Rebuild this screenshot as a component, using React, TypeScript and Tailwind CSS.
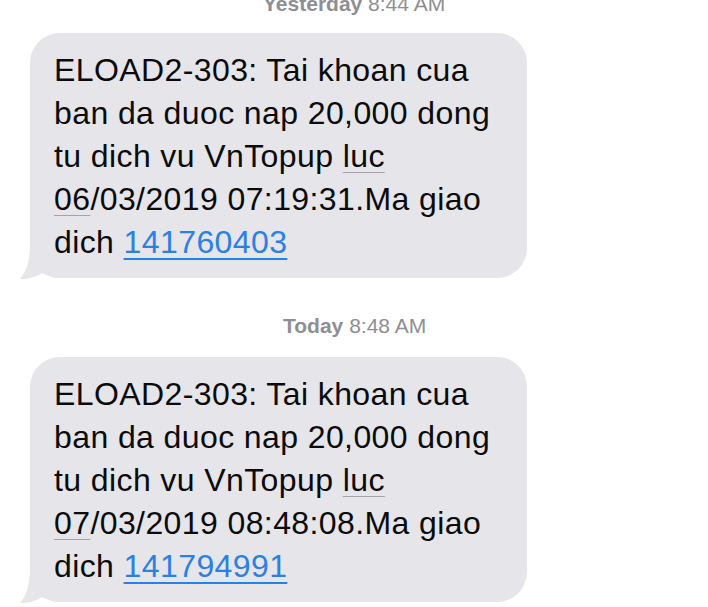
import React from "react";

type Msg = {
    header: string;
    when: string;
    date: string;
    rest: string;
    code: string;
};

const messages: Msg[] = [
    { header: "Yesterday", when: "8:44 AM", date: "06", rest: "/03/2019 07:19:31.Ma giao", code: "141760403" },
    { header: "Today", when: "8:48 AM", date: "07", rest: "/03/2019 08:48:08.Ma giao", code: "141794991" },
];

function Tail() {
    return (
        <svg
            className="absolute left-[-12px] top-[calc(100%-38px)]"
            width="44"
            height="40"
            viewBox="0 0 44 40"
        >
            <path d="M12,5 C12,22 8,32 2,39 C10,39 18,37 24,33 C30,36 36,38 44,38 L44,5 Z" fill="#e5e5ea" />
        </svg>
    );
}

function Bubble({ m }: { m: Msg }) {
    const dotted = "underline decoration-[#a3a3a8] decoration-1 underline-offset-[5px]";
    return (
        <div className="relative ml-[30px] w-[497px] rounded-[30px] bg-[#e5e5ea] pl-[24px] pt-[16px] pb-[14px] text-[32px] leading-[43px] tracking-[0.4px] text-[#0b0b0b]">
            <Tail />
            <div className="relative">
                <div className="whitespace-nowrap">ELOAD2-303: Tai khoan cua</div>
                <div className="whitespace-nowrap">ban da duoc nap 20,000 dong</div>
                <div className="whitespace-nowrap">
                    tu dich vu VnTopup <span className={dotted}>luc</span>
                </div>
                <div className="whitespace-nowrap">
                    <span className={dotted}>{m.date}</span>
                    {m.rest}
                </div>
                <div className="whitespace-nowrap">
                    dich{" "}
                    <span className="text-[#2a80e4] underline decoration-[#2a80e4] decoration-2 underline-offset-[5px]">
                        {m.code}
                    </span>
                </div>
            </div>
        </div>
    );
}

export default function App() {
    return (
        <div
            className="h-[607px] w-[708px] overflow-hidden bg-white"
            style={{ fontFamily: '"Liberation Sans", Arial, sans-serif' }}
        >
            <div className="mt-[-8px] pl-[263px] text-[21px] leading-[24px] text-[#8e8e93]">
                <span className="font-bold">Yesterday</span> 8:44 AM
            </div>
            <div className="mt-[17px]">
                <Bubble m={messages[0]} />
            </div>
            <div className="mt-[36px] pl-[283px] text-[21px] leading-[24px] text-[#8e8e93]">
                <span className="font-bold">Today</span> 8:48 AM
            </div>
            <div className="mt-[19px]">
                <Bubble m={messages[1]} />
            </div>
        </div>
    );
}
